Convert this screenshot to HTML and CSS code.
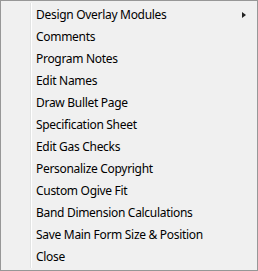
FILE: index.html
```html
<!DOCTYPE html>
<html>
<head>
<meta charset="utf-8">
<link rel="stylesheet" href="styles.css">
</head>
<body>
<div class="menu">
  <div class="gutter"></div>
  <ul class="items">
    <li class="item has-sub">Design Overlay Modules<span class="arrow"></span></li>
    <li class="item">Comments</li>
    <li class="item">Program Notes</li>
    <li class="item">Edit Names</li>
    <li class="item">Draw Bullet Page</li>
    <li class="item">Specification Sheet</li>
    <li class="item">Edit Gas Checks</li>
    <li class="item">Personalize Copyright</li>
    <li class="item">Custom Ogive Fit</li>
    <li class="item">Band Dimension Calculations</li>
    <li class="item">Save Main Form Size &amp; Position</li>
    <li class="item">Close</li>
  </ul>
</div>
</body>
</html>
```
FILE: styles.css
```css
html, body {
  margin: 0;
  padding: 0;
  background: #f0f0f0;
}
.menu {
  box-sizing: border-box;
  width: 258px;
  height: 271px;
  border: 1px solid #979797;
  background: #f0f0f0;
  display: flex;
  padding: 2px 0 2px 0;
  font-family: "Noto Sans", "Open Sans", sans-serif;
  font-size: 12px;
  letter-spacing: -0.3px;
  color: #000;
}
.gutter {
  width: 29px;
  flex: none;
}
.items {
  list-style: none;
  margin: 0;
  padding: 1px 0 0 0;
  flex: 1;
  border-left: 1px solid #e2e3e3;
  box-shadow: inset 1px 0 0 #ffffff;
}
.item {
  height: 22px;
  line-height: 22px;
  padding-left: 5px;
  display: flex;
  align-items: center;
  white-space: nowrap;
}
.has-sub {
  justify-content: space-between;
  padding-right: 11px;
}
.arrow {
  width: 0;
  height: 0;
  border-top: 3.5px solid transparent;
  border-bottom: 3.5px solid transparent;
  border-left: 4px solid #222;
}
```
